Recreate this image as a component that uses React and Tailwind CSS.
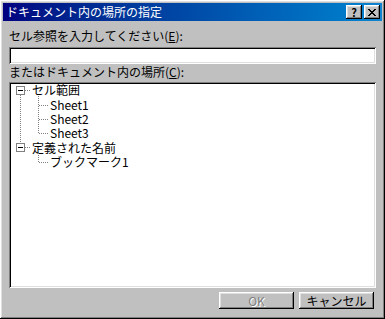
// App.jsx — ドキュメント内の場所の指定 (Win98 style dialog)
import React from 'react';

const font = { fontFamily: '"Noto Sans CJK JP", "Noto Sans", sans-serif' };

const raised =
  'shadow-[inset_-1px_-1px_#000,inset_1px_1px_#fff,inset_-2px_-2px_#808080,inset_2px_2px_#dfdfdf]';
const sunken =
  'shadow-[inset_1px_1px_#808080,inset_-1px_-1px_#fff,inset_2px_2px_#000,inset_-2px_-2px_#dfdfdf]';

const TitleButton = ({ children }) => (
  <div className={`w-[16px] h-[14px] bg-[#c0c0c0] ${raised} flex items-center justify-center`}>
    {children}
  </div>
);

const MinusBox = () => (
  <div className="w-[9px] h-[9px] border border-[#808080] bg-white flex items-center justify-center">
    <div className="w-[5px] h-[1px] bg-black" />
  </div>
);

const TreeLines = () => (
  <svg
    className="absolute left-0 top-0 pointer-events-none"
    width="60"
    height="100"
    shapeRendering="crispEdges"
  >
    <g stroke="#808080" strokeWidth="1" strokeDasharray="1 1">
      {/* root verticals */}
      <line x1="11.5" y1="13" x2="11.5" y2="61" />
      <line x1="16" y1="8.5" x2="22" y2="8.5" />
      <line x1="16" y1="65.5" x2="22" y2="65.5" />
      {/* children of セル範囲 */}
      <line x1="29.5" y1="14" x2="29.5" y2="51" />
      <line x1="30" y1="23.5" x2="40" y2="23.5" />
      <line x1="30" y1="37.5" x2="40" y2="37.5" />
      <line x1="30" y1="51.5" x2="40" y2="51.5" />
      {/* child of 定義された名前 */}
      <line x1="29.5" y1="71" x2="29.5" y2="80" />
      <line x1="30" y1="80.5" x2="40" y2="80.5" />
    </g>
  </svg>
);

const Row = ({ indent, box, children }) => (
  <div className="flex items-center h-[14.4px] text-[12px] leading-none text-black whitespace-nowrap">
    {box ? (
      <div className="w-[23px] pl-[7px] flex items-center">
        <MinusBox />
      </div>
    ) : (
      <div className={indent} />
    )}
    <span>{children}</span>
  </div>
);

export default function App() {
  return (
    <div
      style={font}
      className={`w-[385px] h-[319px] bg-[#c0c0c0] p-[3px] flex flex-col ${raised}`}
    >
      <div className="h-[18px] bg-gradient-to-r from-[#000080] to-[#1084d0] flex items-center justify-between pl-[3px] pr-[2px]">
        <span className="text-white text-[12px] leading-none">ドキュメント内の場所の指定</span>
        <div className="flex items-center gap-[2px]">
          <TitleButton>
            <span className="text-[11px] font-bold leading-none text-black">?</span>
          </TitleButton>
          <TitleButton>
            <svg width="8" height="7" shapeRendering="crispEdges">
              <path d="M0 0h2v1h-2zM6 0h2v1h-2zM1 1h2v1h-2zM5 1h2v1h-2zM2 2h4v1h-4zM3 3h2v1h-2zM2 4h4v1h-4zM1 5h2v1h-2zM5 5h2v1h-2zM0 6h2v1h-2zM6 6h2v1h-2z" fill="#000" />
            </svg>
          </TitleButton>
        </div>
      </div>

      <div className="flex flex-col px-[6px] flex-1">
        <div className="h-[16px] mt-[7px] text-[12px] leading-[16px] text-black">
          セル参照を入力してください(<span className="underline">E</span>):
        </div>
        <div className={`mt-[3px] h-[17px] bg-white ${sunken}`} />
        <div className="h-[16px] text-[12px] leading-[16px] text-black">
          またはドキュメント内の場所(<span className="underline">C</span>):
        </div>
        <div className={`relative mt-[2px] h-[206px] bg-white pt-[1px] ${sunken}`}>
          <TreeLines />
          <Row box>セル範囲</Row>
          <Row indent="w-[41px]">Sheet1</Row>
          <Row indent="w-[41px]">Sheet2</Row>
          <Row indent="w-[41px]">Sheet3</Row>
          <Row box>定義された名前</Row>
          <Row indent="w-[41px]">ブックマーク1</Row>
        </div>
        <div className="mt-[4px] flex justify-end gap-[5px] pr-[2px]">
          <div
            className={`w-[75px] h-[17px] flex items-center justify-center text-[12px] leading-none text-[#808080] ${raised}`}
            style={{ textShadow: '1px 1px 0 #fff' }}
          >
            OK
          </div>
          <div
            className={`w-[75px] h-[17px] flex items-center justify-center text-[12px] leading-none text-black ${raised}`}
          >
            キャンセル
          </div>
        </div>
      </div>
    </div>
  );
}
